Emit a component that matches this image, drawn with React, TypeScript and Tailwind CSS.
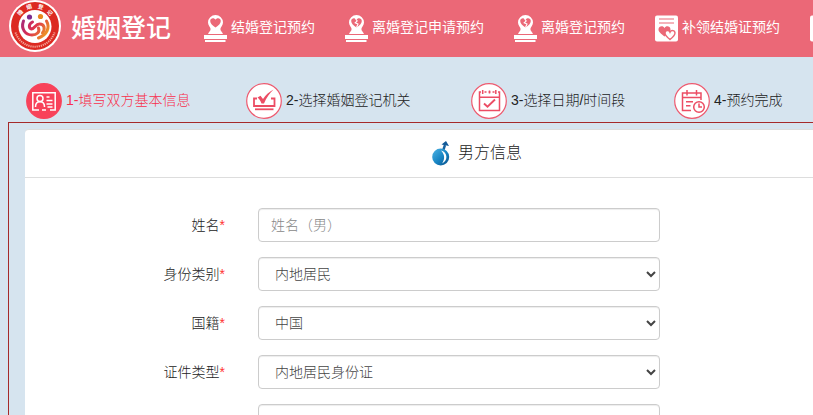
import type { ReactNode } from "react";

function Emblem() {
  return (
    <svg viewBox="0 0 52 52" className="size-[52px] shrink-0 self-start" aria-hidden="true">
      <defs>
        <linearGradient id="figure" gradientUnits="userSpaceOnUse" x1="14" y1="18" x2="39" y2="36">
          <stop offset="0" stopColor="#a32a7c" />
          <stop offset="0.450" stopColor="#dd2f50" />
          <stop offset="1" stopColor="#f0a51c" />
        </linearGradient>
      </defs>
      <circle cx="26" cy="26" r="26" fill="#fff" />
      <circle cx="26" cy="26" r="24" fill="#dc2a22" />
      <circle cx="26" cy="26.500" r="16.500" fill="#fff" />
      <g fontSize="5.500" fill="#fff" fontWeight="700" fontFamily="Noto Sans CJK SC, sans-serif" textAnchor="middle">
        <text transform="rotate(-48 26 26)" x="26" y="8">婚</text>
        <text transform="rotate(-17 26 26)" x="26" y="8">姻</text>
        <text transform="rotate(17 26 26)" x="26" y="8">登</text>
        <text transform="rotate(48 26 26)" x="26" y="8">记</text>
      </g>
      <path d="M6.500 32.500a20.500 20.500 0 0 0 39 0" fill="none" stroke="#f4a89c" strokeWidth="2" strokeDasharray="1.200 0.900" />
      <circle cx="20.500" cy="17" r="2.600" fill="#7d2c8f" />
      <circle cx="31.500" cy="16.500" r="2.600" fill="#e8871d" />
      <g fill="none" stroke="url(#figure)" strokeWidth="3" strokeLinecap="round">
        <path d="M14.500 21c-3 8 2 14 8.500 14 5 0 8-3 6.500-7" />
        <path d="M23.500 22c-4 2-4 6-1 7 3 0 4-5 8-5 5 0 6 5 3 9" />
        <path d="M37.500 21c4 7 0 14-8 17" />
      </g>
    </svg>
  );
}

function StampIcon({ broken = false }: { broken?: boolean }) {
  return (
    <svg viewBox="0 0 23 28" className="h-7 w-[23px] shrink-0" aria-hidden="true">
      <path fill="#fff" d="M11.500 0a7.500 7.500 0 0 1 7.500 7.500c0 3-2.600 5-2.600 6.500 0 2.200 2 3 2.600 5H4c.6-2 2.600-2.800 2.600-5C6.600 12.500 4 10.500 4 7.500A7.500 7.500 0 0 1 11.500 0z" />
      <path fill="#fff" d="M0 20h23v4H0zM1 25h20.500v2H1z" />
      <path fill="#eb6877" d="M11.500 12.500C8.500 10.500 6.200 8.600 6.200 6c0-3 3.900-3.800 5.300-1.200C12.900 2.200 16.800 3 16.800 6c0 2.600-2.300 4.500-5.300 6.500z" />
      {broken && <path d="M10 3l2.200 3-2 1.800 2.800 1.200-1.500 3.500" fill="none" stroke="#fff" strokeWidth="1.100" />}
    </svg>
  );
}

function CertificateIcon() {
  return (
    <svg viewBox="0 0 23 28" className="h-7 w-[23px] shrink-0" aria-hidden="true">
      <rect y="0.500" width="23" height="26" rx="2" fill="#fff" />
      <path d="M4 4h15M4 8h15" stroke="#eb6877" strokeWidth="1.200" />
      <path fill="#eb6877" d="M9.500 21.500C6 18.500 3.500 17 3.500 14.500c0-3.500 4.700-4.300 6-1.300 1.300-3 6-2.200 6 1.300 0 2.500-2.500 4-6 7z" />
      <path fill="#fff" stroke="#eb6877" strokeWidth="1.400" d="M15 24.500c-3.500-2.800-5-4.300-5-6.500 0-2.800 3.900-3.400 5-.8 1.100-2.600 5-2 5 .8 0 2.200-1.500 3.700-5 6.500z" />
    </svg>
  );
}

function StepBadge({ active = false, children }: { active?: boolean; children: ReactNode }) {
  return (
    <svg viewBox="0 0 36 36" className="size-9 shrink-0" fill="none" aria-hidden="true">
      <circle cx="18" cy="18" r="17.300" fill={active ? "#f8425a" : "#fff"} stroke={active ? "#f8425a" : "#ee5b70"} strokeWidth="1.200" />
      {children}
    </svg>
  );
}

const steps = [
  {
    label: "1-填写双方基本信息",
    width: "w-[220px]",
    active: true,
    art: (
      <g stroke="#fff" strokeWidth="1.500">
        <path d="M13 27H6.800V9.800h22.400V27H24M16 27h4" />
        <circle cx="14" cy="15.500" r="3" />
        <path d="M9.500 24c0-3 1.500-5.200 4.500-5.200s4.500 2.200 4.500 5.200M20.500 14h3M20.500 17.500h6M20.500 21h6M21.500 24h5" />
      </g>
    ),
  },
  {
    label: "2-选择婚姻登记机关",
    width: "w-[225px]",
    active: false,
    art: (
      <g stroke="#ec4d64">
        <path d="M11 15.500H8V23h20.500v-7.500H25" strokeWidth="1.800" />
        <path d="M9 26.300h18.500" strokeWidth="1.800" />
        <path fill="#ec4d64" stroke="none" d="M11.500 14.500l3-1.700 2.500 3.200c3-4.500 6-7 10.500-9.500-4 4-7 8-9.500 14h-2.500c-.8-2.500-2-4.500-4-6z" />
      </g>
    ),
  },
  {
    label: "3-选择日期/时间段",
    width: "w-[203px]",
    active: false,
    art: (
      <g stroke="#ec4d64" strokeWidth="1.500">
        <path d="M10 9H8.500v18.500h20V9H27M13.500 9h2M17.500 9h2M21.500 9h2M8.500 14.200h20M11.700 7v4M24.800 7v4M18.500 7.500v3" />
        <path d="M13 20.500l3.500 3.200 7.500-7.200" strokeWidth="1.900" />
      </g>
    ),
  },
  {
    label: "4-预约完成",
    width: "w-[140px]",
    active: false,
    art: (
      <g stroke="#ec4d64" strokeWidth="1.500">
        <path d="M17 27.500H8.500V10H27v7M8.500 14.500H27M13 7v5.500M22.500 7v5.500M12 18.800h7M12 22.800h4.500" />
        <circle cx="25" cy="24" r="5.300" fill="#fff" />
        <path d="M25 20.500V24h3" />
      </g>
    ),
  },
];

const navItems = [
  { label: "结婚登记预约", icon: <StampIcon /> },
  { label: "离婚登记申请预约", icon: <StampIcon broken /> },
  { label: "离婚登记预约", icon: <StampIcon broken /> },
  { label: "补领结婚证预约", icon: <CertificateIcon /> },
];

function MaleIcon() {
  return (
    <svg viewBox="0 0 18 26" className="h-[26px] w-[18px]" aria-hidden="true">
      <defs>
        <linearGradient id="male" x1="0" y1="0" x2="1" y2="1">
          <stop offset="0" stopColor="#4fb4e4" />
          <stop offset="0.550" stopColor="#1683c2" />
          <stop offset="1" stopColor="#0a4c86" />
        </linearGradient>
      </defs>
      <path d="M11 10l2-6" stroke="#17629f" strokeWidth="2.400" />
      <path d="M9.500 3.500L14 0l3 5-3.500-.8z" fill="#125a98" />
      <circle cx="8.700" cy="16" r="8.500" fill="url(#male)" />
      <path d="M9 9.500c6 1 8 10 1 13 3-4 3-9-1-13z" fill="#fff" />
    </svg>
  );
}

function Field({ id, label, children }: { id: string; label: string; children: ReactNode }) {
  return (
    <div className="flex items-center gap-[33px]">
      <label htmlFor={id} className="w-[200px] shrink-0 text-right text-[#222]">
        {label}
        <span className="text-[#f33]">*</span>
      </label>
      {children}
    </div>
  );
}

const controlClass =
  "h-[34px] w-[402px] rounded border border-[#ccc] bg-white px-3 text-sm text-[#444] shadow-[inset_0_1px_1px_rgba(0,0,0,0.075)] outline-none placeholder:text-[#888]";

const selects = [
  { id: "identity", label: "身份类别", options: ["内地居民"] },
  { id: "nationality", label: "国籍", options: ["中国"] },
  { id: "document", label: "证件类型", options: ["内地居民身份证"] },
];

export default function App() {
  return (
    <div className="flex h-screen flex-col overflow-hidden bg-[#d6e4ef] font-['Liberation_Sans','Noto_Sans_CJK_SC',sans-serif] text-sm leading-5 font-light">
      <header className="flex h-[57px] shrink-0 items-center bg-[#eb6877] pl-[9px] text-white">
        <Emblem />
        <h1 className="ml-[10px] w-[133px] shrink-0 pb-0.5 text-[25px] leading-8 font-medium whitespace-nowrap">婚姻登记</h1>
        <nav className="flex gap-[30px] font-normal">
          {navItems.map((item) => (
            <a key={item.label} href="#" className="flex shrink-0 items-center gap-1 whitespace-nowrap">
              {item.icon}
              <span className="pb-1">{item.label}</span>
            </a>
          ))}
          <a href="#" aria-label="更多" className="shrink-0">
            <CertificateIcon />
          </a>
        </nav>
      </header>

      <ol className="flex shrink-0 pt-[26px] pb-[3px] pl-[26px]">
        {steps.map((step) => (
          <li key={step.label} className={`flex shrink-0 items-center gap-1 whitespace-nowrap ${step.width} ${step.active ? "text-[#f8304c]" : "text-[#222]"}`}>
            <StepBadge active={step.active}>{step.art}</StepBadge>
            <span className="pb-0.5">{step.label}</span>
          </li>
        ))}
      </ol>

      <main className="ml-2 min-w-[938px] grow border border-[#a52a2a] px-4 pt-[6px]">
        <section className="rounded border-t border-[#ddd] bg-white pb-8">
          <h2 className="flex h-12 items-center justify-center gap-2 border-b border-[#ddd] text-base text-[#222]">
            <MaleIcon />
            <span className="pb-0.5">男方信息</span>
          </h2>
          <form className="flex flex-col gap-[15px] pt-[30px]">
            <Field id="name" label="姓名">
              <input id="name" type="text" placeholder="姓名（男）" className={controlClass} />
            </Field>
            {selects.map((field) => (
              <Field key={field.id} id={field.id} label={field.label}>
                <select id={field.id} className={controlClass}>
                  {field.options.map((option) => (
                    <option key={option}>{option}</option>
                  ))}
                </select>
              </Field>
            ))}
            <input type="text" aria-label="证件号码" className={`ml-[233px] ${controlClass}`} />
          </form>
        </section>
      </main>
    </div>
  );
}
